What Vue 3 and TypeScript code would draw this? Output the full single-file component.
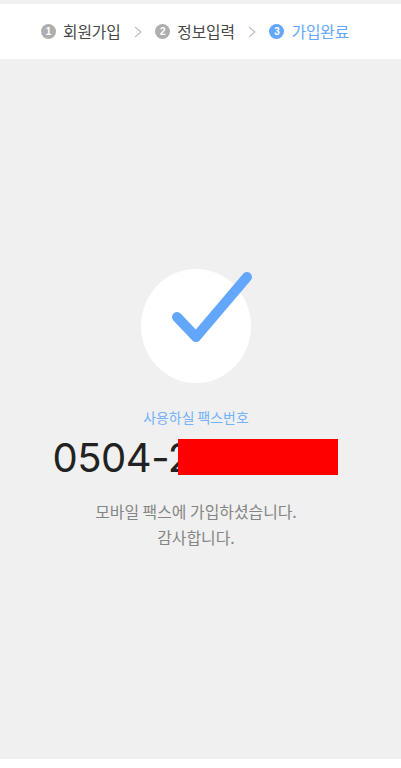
<script setup lang="ts">
interface Step { num: number; label: string; active: boolean }
const steps: Step[] = [
  { num: 1, label: '회원가입', active: false },
  { num: 2, label: '정보입력', active: false },
  { num: 3, label: '가입완료', active: true },
]
</script>

<template>
  <div class="page">
    <header class="steps">
      <template v-for="(s, i) in steps" :key="s.num">
        <div class="step" :class="{ active: s.active }">
          <span class="badge">{{ s.num }}</span>
          <span class="label">{{ s.label }}</span>
        </div>
        <svg v-if="i < steps.length - 1" class="chev" width="8" height="12" viewBox="0 0 8 12">
          <path d="M1 1l6 5-6 5" fill="none" stroke="#bdbdbd" stroke-width="1.1" />
        </svg>
      </template>
    </header>
    <main class="body">
      <div class="check-wrap">
        <div class="circle"></div>
        <svg class="check" width="110" height="90" viewBox="0 0 110 90">
          <path d="M7 48 L26 68 L77 8" fill="none" stroke="#62a7fb" stroke-width="10" stroke-linecap="round" stroke-linejoin="round" />
        </svg>
      </div>
      <p class="caption">사용하실 팩스번호</p>
      <div class="number">
        <span class="digits">0504-2</span>
        <span class="mask"></span>
      </div>
      <p class="msg">모바일 팩스에 가입하셨습니다.<br />감사합니다.</p>
    </main>
    <div class="foot"></div>
  </div>
</template>

<style scoped>
.page {
  width: 401px;
  height: 768px;
  display: flex;
  flex-direction: column;
  background: #fff;
  font-family: "Noto Sans CJK KR", "Noto Sans", sans-serif;
  overflow: hidden;
  padding-top: 4px;
  box-sizing: border-box;
  position: relative;
}
.page::before {
  content: "";
  position: absolute;
  top: 0;
  left: 0;
  right: 0;
  height: 4px;
  background: #f0f0f0;
}
.steps {
  height: 55px;
  flex: none;
  display: flex;
  align-items: center;
  padding-left: 41px;
  box-sizing: border-box;
}
.step {
  display: flex;
  align-items: center;
  gap: 7px;
  color: #484848;
  font-size: 15.8px;
  letter-spacing: -0.1px;
}
.step.active { color: #62a7fb; }
.badge {
  width: 15px;
  height: 15px;
  border-radius: 50%;
  background: #aeaeae;
  color: #fff;
  font-size: 10px;
  font-weight: 700;
  line-height: 15px;
  text-align: center;
  font-family: "Liberation Sans", sans-serif;
}
.active .badge { background: #62a7fb; }
.chev { margin: 0 13.5px 0 13px; }
.body {
  flex: 1;
  background: #f0f0f0;
  display: flex;
  flex-direction: column;
  align-items: center;
  padding: 210px 9px 0 0;
  box-sizing: border-box;
}
.check-wrap {
  position: relative;
  width: 110px;
  height: 114px;
}
.circle {
  width: 110px;
  height: 114px;
  border-radius: 50%;
  background: #fff;
}
.check {
  position: absolute;
  left: 29px;
  top: 0;
}
.caption {
  margin: 24px 0 0;
  color: #74b1fb;
  font-size: 13.9px;
  line-height: 20px;
}
.number {
  position: relative;
  width: 284px;
  margin-top: 12px;
  height: 40px;
  font-family: Inter, "Liberation Sans", sans-serif;
  font-size: 40px;
  line-height: 38px;
  letter-spacing: -0.5px;
  text-indent: -1.5px;
  color: #222;
}
.mask {
  position: absolute;
  right: 0;
  top: 0;
  width: 160px;
  height: 36px;
  background: #f00;
}
.msg {
  margin: 20px 0 0;
  color: #858585;
  font-size: 15.9px;
  line-height: 26px;
  text-align: center;
}
.foot { height: 9px; flex: none; }
</style>
